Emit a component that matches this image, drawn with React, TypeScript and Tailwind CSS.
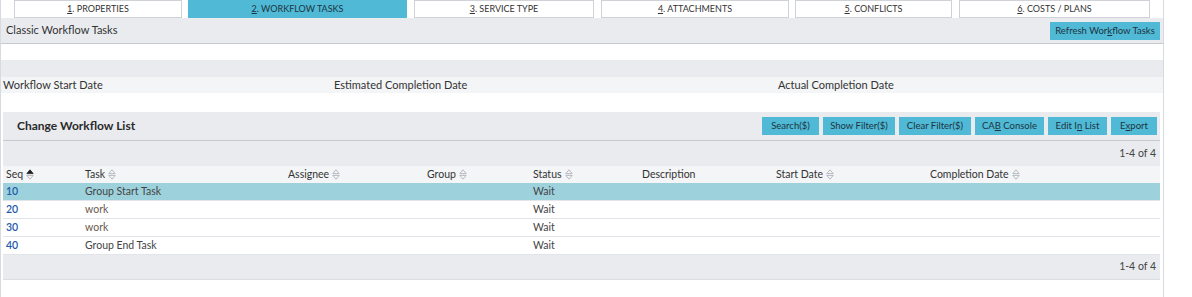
import React from 'react';

const tabs = [
  { n: '1', label: '. PROPERTIES', cls: 'ml-0 w-[168px]', active: false },
  { n: '2', label: '. WORKFLOW TASKS', cls: 'ml-[6px] w-[219px]', active: true },
  { n: '3', label: '. SERVICE TYPE', cls: 'ml-[7px] w-[180px]', active: false },
  { n: '4', label: '. ATTACHMENTS', cls: 'ml-[7px] w-[188px]', active: false },
  { n: '5', label: '. CONFLICTS', cls: 'ml-[6px] w-[157px]', active: false },
  { n: '6', label: '. COSTS / PLANS', cls: 'ml-[7px] w-[191px]', active: false },
];

const rows = [
  { seq: '10', task: 'Group Start Task', status: 'Wait', selected: true },
  { seq: '20', task: 'work', status: 'Wait', selected: false },
  { seq: '30', task: 'work', status: 'Wait', selected: false },
  { seq: '40', task: 'Group End Task', status: 'Wait', selected: false },
];

function SortIcon({ active = false }: { active?: boolean }) {
  return (
    <svg width="8" height="11" viewBox="0 0 8 11" className="ml-[3px] inline-block">
      <path
        d="M4 0.8 L7.2 4.6 L0.8 4.6 Z"
        fill={active ? '#222' : 'none'}
        stroke={active ? '#222' : '#a8acb2'}
        strokeWidth="0.8"
      />
      <path d="M4 10.2 L7.2 6.4 L0.8 6.4 Z" fill="none" stroke="#a8acb2" strokeWidth="0.8" />
    </svg>
  );
}

function Btn({ w, children }: { w: string; children: React.ReactNode }) {
  return (
    <button className={`h-[18px] bg-[#4fb9d6] text-center text-[9.5px] leading-[18px] text-[#1e3440] ${w}`}>
      {children}
    </button>
  );
}

export default function App() {
  return (
    <div className="h-[297px] w-[1192px] bg-white font-['Lato',sans-serif] text-[#333]">
      <div className="h-full w-[1164px] border-r border-l border-[#d7dadf]">
        {/* Tabs */}
        <div className="flex h-[18px] pl-[13px]">
          {tabs.map((t) => (
            <div
              key={t.n}
              className={`flex h-[18px] items-center justify-center text-[9px] ${t.cls} ${
                t.active
                  ? 'bg-[#4fb9d6] text-[#1e3440]'
                  : 'border border-[#cfd2d6] bg-white text-[#333]'
              }`}
            >
              <span className="underline">{t.n}</span>
              {t.label}
            </div>
          ))}
        </div>

        {/* Classic header */}
        <div className="flex h-[26px] items-center justify-between border-b border-[#c6cad0] bg-[#e9ebef] pr-[3px] pl-[5px]">
          <span className="text-[11px]">Classic Workflow Tasks</span>
          <Btn w="w-[110px]">
            Refresh Wor<span className="underline">k</span>flow Tasks
          </Btn>
        </div>

        <div className="h-[16px]" />
        <div className="h-[17px] bg-[#e9ebef]" />
        <div className="flex h-[16px] items-center bg-[#f4f5f7] text-[11px]">
          <span className="w-[333px] pl-[2px]">Workflow Start Date</span>
          <span className="w-[444px]">Estimated Completion Date</span>
          <span>Actual Completion Date</span>
        </div>
        <div className="h-[19px]" />

        {/* Change Workflow List panel */}
        <div className="ml-[2px] w-[1157px]">
          <div className="flex h-[29px] items-center justify-between border-b border-[#c6cad0] bg-[#e9ebef] pr-[3px] pl-[14px]">
            <span className="text-[12px] font-bold text-[#2a2a2a]">Change Workflow List</span>
            <div className="flex gap-[4px]">
              <Btn w="w-[57px]">Search($)</Btn>
              <Btn w="w-[72px]">Show Filter($)</Btn>
              <Btn w="w-[72px]">Clear Filter($)</Btn>
              <Btn w="w-[69px]">
                CA<span className="underline">B</span> Console
              </Btn>
              <Btn w="w-[59px]">
                Edit I<span className="underline">n</span> List
              </Btn>
              <Btn w="w-[46px]">
                E<span className="underline">x</span>port
              </Btn>
            </div>
          </div>
          <div className="flex h-[25px] items-center justify-end bg-[#e9ebef] pr-[4px] text-[10.5px] text-[#444]">
            1-4 of 4
          </div>
          <div className="grid h-[17px] grid-cols-[79px_203px_139px_106px_109px_134px_154px_1fr] items-center bg-[#f4f5f7] pl-[3px] text-[10.5px]">
            <span className="flex items-center">Seq<SortIcon active /></span>
            <span className="flex items-center">Task<SortIcon /></span>
            <span className="flex items-center">Assignee<SortIcon /></span>
            <span className="flex items-center">Group<SortIcon /></span>
            <span className="flex items-center">Status<SortIcon /></span>
            <span>Description</span>
            <span className="flex items-center">Start Date<SortIcon /></span>
            <span className="flex items-center">Completion Date<SortIcon /></span>
          </div>
          {rows.map((r) => (
            <div
              key={r.seq}
              className={`grid h-[18px] grid-cols-[79px_203px_139px_106px_109px_134px_154px_1fr] items-center border-b border-[#e1e4e8] pl-[3px] text-[10.5px] ${
                r.selected ? 'bg-[#9dd2dd]' : 'bg-white'
              }`}
            >
              <span className="font-semibold text-[#2359a8]">{r.seq}</span>
              <span className={r.task === 'work' ? 'text-[#6b5a4e]' : 'text-[#444]'}>{r.task}</span>
              <span />
              <span />
              <span className="text-[#444]">{r.status}</span>
              <span />
              <span />
              <span />
            </div>
          ))}
          <div className="flex h-[25px] items-center justify-end border-b border-[#dadde2] bg-[#e9ebef] pr-[4px] text-[10.5px] text-[#444]">
            1-4 of 4
          </div>
        </div>
      </div>
    </div>
  );
}
